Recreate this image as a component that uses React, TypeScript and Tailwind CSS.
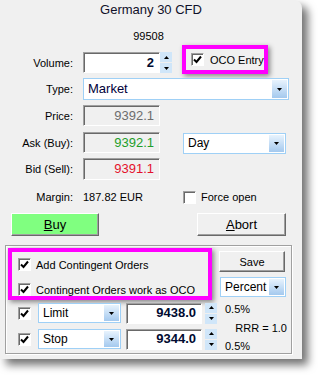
import React from "react";

const Arrow = ({ up = false }: { up?: boolean }) => (
  <svg width="5" height="3" viewBox="0 0 5 3">
    <polygon points={up ? "0,3 5,3 2.5,0" : "0,0 5,0 2.5,3"} fill="#000" />
  </svg>
);

const CheckBox = ({ checked = false }: { checked?: boolean }) => (
  <div className="w-[13px] h-[13px] shrink-0 bg-white border border-[#a0a0a0] border-b-white border-r-white shadow-[inset_1px_1px_0_#696969] flex items-center justify-center">
    {checked && (
      <svg width="9" height="9" viewBox="0 0 9 9">
        <polyline points="1,4.5 3.5,7 8,1.5" fill="none" stroke="#000" strokeWidth="2" />
      </svg>
    )}
  </div>
);

const SunkenBox = ({
  className,
  children,
}: {
  className: string;
  children: React.ReactNode;
}) => (
  <div
    className={`bg-white border border-[#a0a0a0] border-b-white border-r-white shadow-[inset_1px_1px_0_#696969] flex items-center justify-end pr-[5px] ${className}`}
  >
    {children}
  </div>
);

const Combo = ({
  className,
  text,
  textClass,
}: {
  className: string;
  text: string;
  textClass: string;
}) => (
  <div className={`bg-white border border-[#9fd0f6] flex items-center justify-between pl-[4px] pr-[1px] ${className}`}>
    <span className={textClass}>{text}</span>
    <div className="w-[15px] h-[calc(100%-2px)] bg-gradient-to-b from-[#e8f3fd] to-[#a4c9ee] flex items-center justify-center">
      <Arrow />
    </div>
  </div>
);

const Spinner = ({ className }: { className: string }) => (
  <div className={`w-[12px] flex flex-col gap-[1px] ${className}`}>
    <div className="flex-1 bg-[#d0e6f9] flex items-center justify-center">
      <Arrow up />
    </div>
    <div className="flex-1 bg-[#d0e6f9] flex items-center justify-center">
      <Arrow />
    </div>
  </div>
);

const Button = ({
  className,
  children,
}: {
  className: string;
  children: React.ReactNode;
}) => (
  <div
    className={`border border-t-white border-l-white border-b-[#696969] border-r-[#696969] shadow-[inset_-1px_-1px_0_#a0a0a0] flex items-center justify-center ${className}`}
  >
    {children}
  </div>
);

const Label = ({ text }: { text: string }) => (
  <div className="w-[73px] text-right shrink-0">{text}</div>
);

export default function App() {
  return (
    <div className="w-[318px] h-[377px] bg-white font-['Liberation_Sans',Arial,sans-serif] text-[11px] text-black leading-[14px]">
      <div className="w-[302px] h-[359px] bg-[#f0f0f0] rounded-tr-[8px] shadow-[6px_6px_9px_rgba(0,0,0,0.55)] flex flex-col">
        {/* Header */}
        <div className="h-[19px] leading-[19px] text-[13px] text-center text-[#10102a]">Germany 30 CFD</div>
        <div className="mt-[10px] text-center pr-[5px]">99508</div>

        {/* Volume */}
        <div className="mt-[9px] h-[21px] flex items-center">
          <Label text="Volume:" />
          <SunkenBox className="ml-[10px] w-[77px] h-[21px]">
            <span className="text-[13px] font-bold text-[#000a30]">2</span>
          </SunkenBox>
          <Spinner className="h-[21px]" />
          <div className="self-start -mt-[7px] ml-[10px] w-[86px] h-[29px] border-[4px] border-[#ff00ff] shadow-[2px_2px_5px_rgba(0,0,0,0.45)] flex items-center pl-[5px] gap-[6px]">
            <CheckBox checked />
            <span>OCO Entry</span>
          </div>
        </div>

        {/* Type */}
        <div className="mt-[5px] h-[22px] flex items-center">
          <Label text="Type:" />
          <Combo className="ml-[10px] w-[206px] h-[22px]" text="Market" textClass="text-[13px] text-[#00003a]" />
        </div>

        {/* Price */}
        <div className="mt-[5px] h-[21px] flex items-center">
          <Label text="Price:" />
          <SunkenBox className="ml-[10px] w-[77px] h-[21px] !bg-[#f0f0f0]">
            <span className="text-[13px] text-[#6d6d6d]">9392.1</span>
          </SunkenBox>
        </div>

        {/* Ask */}
        <div className="mt-[6px] h-[21px] flex items-center">
          <Label text="Ask (Buy):" />
          <SunkenBox className="ml-[10px] w-[77px] h-[21px] !bg-[#f0f0f0]">
            <span className="text-[13px] text-[#1e9e2a]">9392.1</span>
          </SunkenBox>
          <Combo className="ml-[23px] w-[103px] h-[21px] mt-[1px]" text="Day" textClass="text-[12px]" />
        </div>

        {/* Bid */}
        <div className="mt-[5px] h-[22px] flex items-center">
          <Label text="Bid (Sell):" />
          <SunkenBox className="ml-[10px] w-[77px] h-[22px] !bg-[#f0f0f0]">
            <span className="text-[13px] text-[#e4102c]">9391.1</span>
          </SunkenBox>
        </div>

        {/* Margin */}
        <div className="mt-[10px] h-[14px] flex items-center">
          <Label text="Margin:" />
          <span className="ml-[10px] w-[100px]">187.82 EUR</span>
          <CheckBox />
          <span className="ml-[5px]">Force open</span>
        </div>

        {/* Buttons */}
        <div className="mt-[9px] h-[23px] flex">
          <Button className="ml-[11px] w-[88px] bg-[#80ff80] text-[13px]">
            <span>
              <span className="underline">B</span>uy
            </span>
          </Button>
          <Button className="ml-auto mr-[16px] w-[89px] text-[13px]">
            <span>
              <span className="underline">A</span>bort
            </span>
          </Button>
        </div>

        {/* Contingent group */}
        <div className="mt-[9px] ml-[5px] w-[287px] h-[109px] border border-[#a0a0a0] shadow-[inset_1px_1px_0_#fff,1px_1px_0_#fff] flex flex-col">
          <div className="flex items-start pt-[2px] pl-[2px]">
            <div className="w-[204px] h-[52px] border-[4px] border-[#ff00ff] shadow-[2px_2px_5px_rgba(0,0,0,0.45)] flex flex-col pl-[6px] pt-[6px]">
              <div className="flex items-center gap-[5px] h-[13px]">
                <CheckBox checked />
                <span>Add Contingent Orders</span>
              </div>
              <div className="flex items-center gap-[5px] h-[13px] mt-[12px]">
                <CheckBox checked />
                <span className="whitespace-nowrap">Contingent Orders work as OCO</span>
              </div>
            </div>
            <div className="ml-[7px] mt-[3px] flex flex-col">
              <Button className="w-[66px] h-[21px]">Save</Button>
              <Combo className="mt-[5px] ml-[1px] w-[66px] h-[20px]" text="Percent" textClass="text-[12px]" />
            </div>
          </div>

          <div className="mt-[2px] flex">
            <div className="flex flex-col">
              <div className="h-[22px] flex items-center pl-[12px]">
                <CheckBox checked />
                <Combo className="ml-[7px] w-[83px] h-[20px]" text="Limit" textClass="text-[12px]" />
                <SunkenBox className="ml-[5px] w-[76px] h-[21px]">
                  <span className="text-[13px] font-bold text-[#000a30]">9438.0</span>
                </SunkenBox>
                <Spinner className="ml-[3px] h-[21px]" />
              </div>
              <div className="mt-[4px] h-[22px] flex items-center pl-[12px]">
                <CheckBox checked />
                <Combo className="ml-[7px] w-[83px] h-[20px]" text="Stop" textClass="text-[12px]" />
                <SunkenBox className="ml-[5px] w-[76px] h-[21px]">
                  <span className="text-[13px] font-bold text-[#000a30]">9344.0</span>
                </SunkenBox>
                <Spinner className="ml-[3px] h-[21px]" />
              </div>
            </div>
            <div className="ml-[8px] w-[62px] flex flex-col">
              <span>0.5%</span>
              <span className="mt-[5px] self-end">RRR = 1.0</span>
              <span className="mt-[4px]">0.5%</span>
            </div>
          </div>
        </div>
      </div>
    </div>
  );
}
